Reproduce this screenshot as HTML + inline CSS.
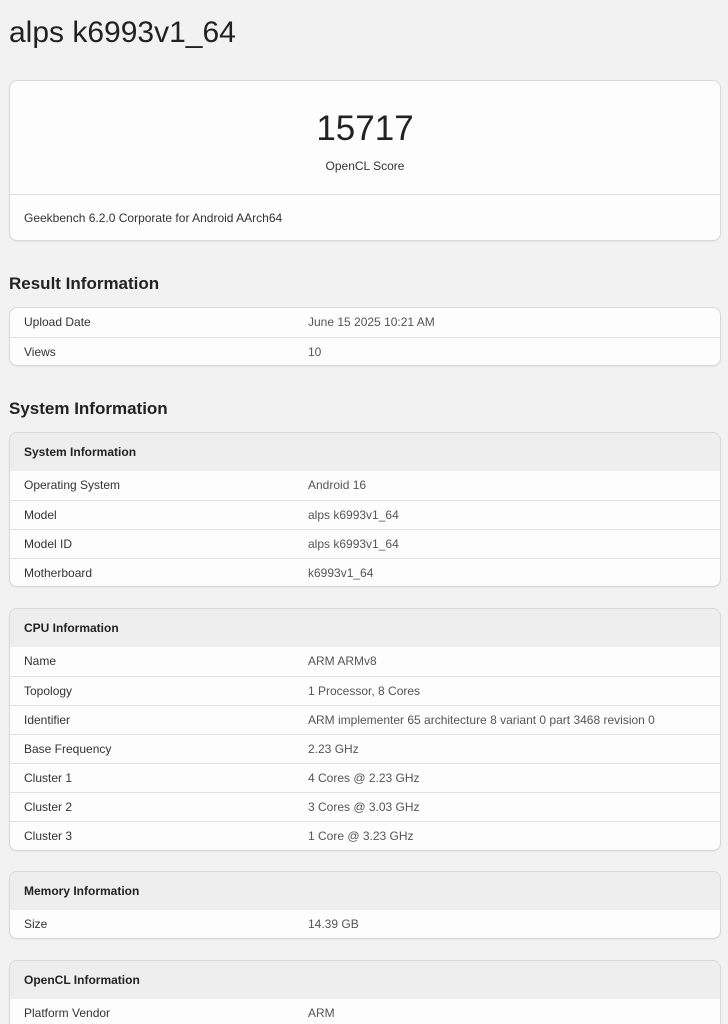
<!DOCTYPE html>
<html><head><meta charset="utf-8"><style>
*{box-sizing:border-box;margin:0;padding:0}
html,body{height:1024px;overflow:hidden}
body{background:#f2f2f2;font-family:"Liberation Sans",Arial,sans-serif;color:#222;width:728px;position:relative}
h1{position:absolute;left:9px;top:16px;font-size:30px;font-weight:normal;color:#222}
h2{position:absolute;left:9px;font-size:17px;font-weight:bold;color:#222}
.card{position:absolute;left:9px;width:712px;background:#fdfdfd;border:1px solid #d8d8d8;border-radius:8px;overflow:hidden;box-shadow:0 1px 1px rgba(0,0,0,.05)}
.hd{height:38px;background:#eeeeee;font-weight:bold;font-size:12px;padding:0 14px;line-height:38px;color:#222}
.row{height:29px;line-height:28px;font-size:12px;border-top:1px solid #e2e2e2;position:relative;padding-left:14px;color:#333}
.hd+.row,.first{border-top:none}
.row span{position:absolute;left:298px;color:#555}
</style></head><body>
<h1>alps k6993v1_64</h1>
<div class="card" style="top:80px;height:161px">
<div style="height:114px;text-align:center;border-bottom:1px solid #e0e0e0">
<div style="padding-top:28px;font-size:35px;color:#222;line-height:40px">15717</div>
<div style="font-size:12px;color:#333;margin-top:10px">OpenCL Score</div></div>
<div style="font-size:12px;padding:16px 14px;color:#333">Geekbench 6.2.0 Corporate for Android AArch64</div>
</div>
<h2 style="top:274px">Result Information</h2>
<div class="card" style="top:307px;height:59px">
<div class="row first">Upload Date<span>June 15 2025 10:21 AM</span></div>
<div class="row">Views<span>10</span></div>
</div>
<h2 style="top:399px">System Information</h2>
<div class="card" style="top:432px;height:155px">
<div class="hd">System Information</div>
<div class="row">Operating System<span>Android 16</span></div>
<div class="row">Model<span>alps k6993v1_64</span></div>
<div class="row">Model ID<span>alps k6993v1_64</span></div>
<div class="row">Motherboard<span>k6993v1_64</span></div>
</div>
<div class="card" style="top:608px;height:243px">
<div class="hd">CPU Information</div>
<div class="row">Name<span>ARM ARMv8</span></div>
<div class="row">Topology<span>1 Processor, 8 Cores</span></div>
<div class="row">Identifier<span>ARM implementer 65 architecture 8 variant 0 part 3468 revision 0</span></div>
<div class="row">Base Frequency<span>2.23 GHz</span></div>
<div class="row">Cluster 1<span>4 Cores @ 2.23 GHz</span></div>
<div class="row">Cluster 2<span>3 Cores @ 3.03 GHz</span></div>
<div class="row">Cluster 3<span>1 Core @ 3.23 GHz</span></div>
</div>
<div class="card" style="top:871px;height:68px">
<div class="hd">Memory Information</div>
<div class="row">Size<span>14.39 GB</span></div>
</div>
<div class="card" style="top:960px;height:64px;border-bottom:none;border-radius:8px 8px 0 0">
<div class="hd">OpenCL Information</div>
<div class="row">Platform Vendor<span>ARM</span></div>
</div>
</body></html>
